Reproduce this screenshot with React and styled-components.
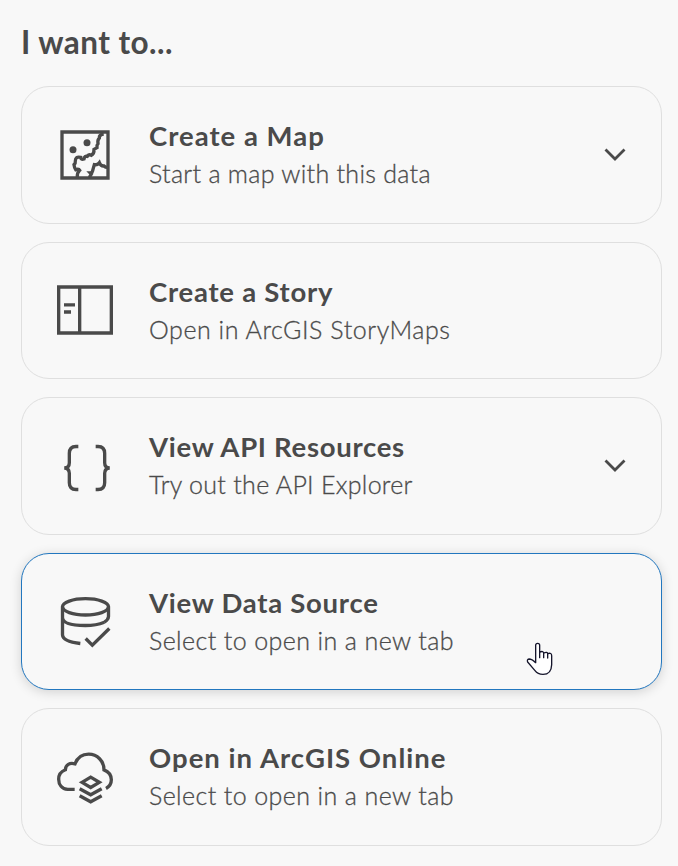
import React from "react";
import styled, { createGlobalStyle } from "styled-components";

const GlobalStyle = createGlobalStyle`
  * { box-sizing: border-box; }
  body {
    margin: 0;
    background: #f8f8f8;
    color: #4a4a4a;
    font-family: Lato, "Open Sans", sans-serif;
    overflow: hidden;
  }
`;

const Panel = styled.main`
  position: relative;
  height: 866px;
  padding: 21px 16px 0 21px;
`;

const Heading = styled.h1`
  margin: 0 0 23.3px;
  font-size: 31.5px;
  line-height: 42px;
  font-weight: 700;
  letter-spacing: ${(p) => p.$tracking}px;
  white-space: nowrap;
`;

const CardList = styled.div`
  display: flex;
  flex-direction: column;
  gap: 18.2px;
`;

const Card = styled.button`
  display: flex;
  align-items: center;
  width: 641px;
  height: 137.3px;
  padding: 0 32.5px 0 23px;
  border: 1px solid ${(p) => (p.$active ? "#2277bf" : "#dfdfdf")};
  border-radius: 28px;
  background: #f8f8f8;
  color: inherit;
  font-family: inherit;
  text-align: left;
  box-shadow: ${(p) => (p.$active ? "0 2px 12px rgba(0, 0, 0, 0.16)" : "none")};
`;

const Icon = styled.svg`
  flex: none;
  width: 80px;
  height: 80px;
  margin-right: 24px;
  fill: none;
  stroke: #4a4a4a;
  stroke-width: 10;
`;

const Copy = styled.span`
  flex: 1;
  display: flex;
  flex-direction: column;
  padding-bottom: 0.3px;
  white-space: nowrap;
`;

const Title = styled.span`
  font-size: 27.5px;
  line-height: 38px;
  font-weight: 700;
  letter-spacing: ${(p) => p.$tracking}px;
`;

const Subtitle = styled.span`
  font-size: 25px;
  line-height: 37px;
  font-weight: 300;
  letter-spacing: ${(p) => p.$tracking}px;
  -webkit-text-stroke: 0.3px #4a4a4a;
`;

const Chevron = styled.svg`
  flex: none;
  width: 28px;
  height: 20px;
  margin-bottom: 1px;
  fill: none;
  stroke: #4a4a4a;
  stroke-width: 2.8;
`;

const Pointer = styled.svg`
  position: absolute;
  left: 515px;
  top: 630px;
  width: 50px;
  height: 50px;
  fill: #fff;
  stroke: #15152b;
  stroke-width: 4;
  stroke-linejoin: round;
  stroke-linecap: round;
`;

const MapIcon = () => (
  <Icon viewBox="0 0 240 240">
    <path d="M51 51H189V189H51Z" />
    <g fill="#4a4a4a" stroke="none">
      <circle cx="84" cy="104.500" r="10.500" />
      <circle cx="126" cy="83.500" r="10.500" />
    </g>
    <path d="M176 57Q162 59 163 69Q157 75 159 86Q155 90 156 98L147 103Q148 116 139 121Q132 117 127 124Q119 122 117 132Q107 135 107 127Q91 123 91 138Q92 145 87 149Q88 158 92 164Q101 160 104 166Q96 173 97 187M133 187L139 177L136 174Q142 174 144 163L148 149Q157 151 163 143Q167 154 177 153Q182 158 190 157" />
  </Icon>
);

const StoryIcon = () => (
  <Icon viewBox="0 0 240 240">
    <path d="M41 51H199V189H41Z M104 51V189M57 104.500H90M57 126H78" />
  </Icon>
);

const BracesIcon = () => (
  <Icon viewBox="0 -6 240 240">
    <path d="M100 55.500H93Q73 56 73 76V104Q73 119 58 120Q73 121 73 136V164Q73 184 93 184.500H100M152 55.500H159Q179 56 179 76V104Q179 119 194 120Q179 121 179 136V164Q179 184 159 184.500H152" />
  </Icon>
);

const DatabaseIcon = () => (
  <Icon viewBox="0 -5.500 240 240">
    <ellipse cx="121.500" cy="72" rx="69" ry="24.500" />
    <path d="M52.500 72V156Q54 176 106 182M190.500 72V101Q190 111 178 118M52.500 104C53 122 86 128 121 128C148 128 166 123 178 118" />
    <path d="M122 167L142 187L193 137" />
  </Icon>
);

const CloudIcon = () => (
  <Icon viewBox="0 -3.500 240 240">
    <path d="M89 153.500H68C51 152 41 139 41 123C41 108 49 100 61 95C62 79 74 73 90 77C97 59 112 48 131 48C157 48 177 69 177 95C192 101 199 111 199 125C199 137 194 145 183 151" />
    <path d="M111 132.500L137 117L163 132.500L137 148Z" />
    <path d="M104 152L137 170L170 152M104 173L137 191L170 173" />
  </Icon>
);

const items = [
  { icon: MapIcon, title: "Create a Map", tt: 1, sub: "Start a map with this data", st: 0.29, expands: true },
  { icon: StoryIcon, title: "Create a Story", tt: 0.75, sub: "Open in ArcGIS StoryMaps", st: 0.55 },
  { icon: BracesIcon, title: "View API Resources", tt: 0.7, sub: "Try out the API Explorer", st: 0.28, expands: true },
  { icon: DatabaseIcon, title: "View Data Source", tt: 0.73, sub: "Select to open in a new tab", st: 0.4, active: true },
  { icon: CloudIcon, title: "Open in ArcGIS Online", tt: 1.02, sub: "Select to open in a new tab", st: 0.4 },
];

export default function App() {
  return (
    <Panel>
      <GlobalStyle />
      <Heading $tracking={0.45}>I want to...</Heading>
      <CardList>
        {items.map(({ icon: Glyph, title, tt, sub, st, expands, active }) => (
          <Card key={title} $active={active}>
            <Glyph />
            <Copy>
              <Title $tracking={tt}>{title}</Title>
              <Subtitle $tracking={st}>{sub}</Subtitle>
            </Copy>
            {expands && (
              <Chevron viewBox="0 0 28 20">
                <path d="M4.500 5.500L14 15L23.500 5.500" />
              </Chevron>
            )}
          </Card>
        ))}
      </CardList>
      <Pointer viewBox="0 0 150 150">
        <path d="M62 98V46Q62 40 68 40Q74 40 74 46V66Q85 62 86 69Q97 64 98 71Q110 67 110 77V104Q109 133 84 133Q68 133 60 122L38 96Q35 88 42 87Q51 87 62 98Z" />
        <path fill="none" d="M74 66V83M86 69V83M98 72V84" />
      </Pointer>
    </Panel>
  );
}
